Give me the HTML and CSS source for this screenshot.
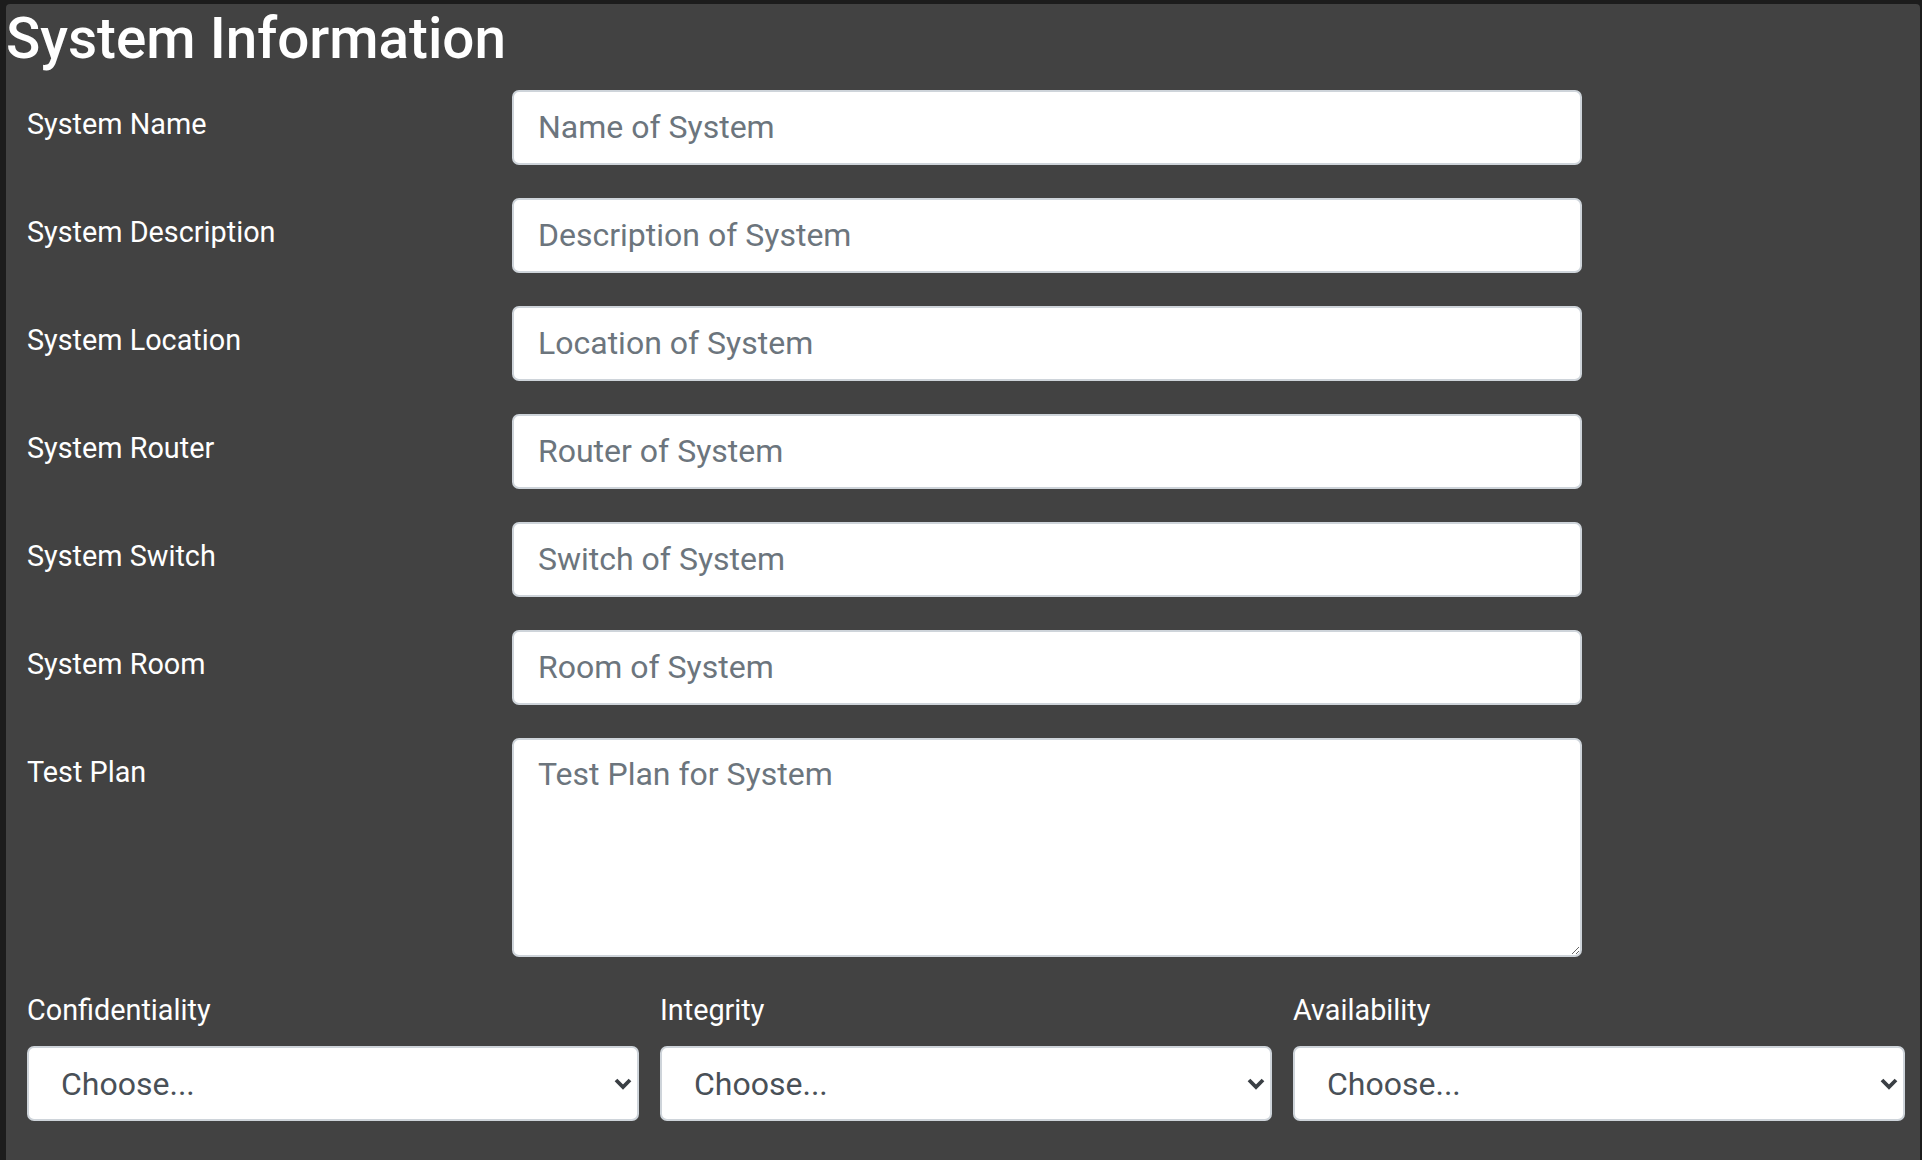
FILE: index.html
```html
<!DOCTYPE html>
<html lang="en">
<head>
<meta charset="utf-8">
<title>System Information</title>
<link rel="stylesheet" href="styles.css">
</head>
<body>
<div class="panel">
  <h2 class="title">System Information</h2>
  <form class="form">
    <div class="row">
      <label class="label" for="f-name">System Name</label>
      <input class="field" id="f-name" type="text" placeholder="Name of System">
    </div>
    <div class="row">
      <label class="label" for="f-desc">System Description</label>
      <input class="field" id="f-desc" type="text" placeholder="Description of System">
    </div>
    <div class="row">
      <label class="label" for="f-loc">System Location</label>
      <input class="field" id="f-loc" type="text" placeholder="Location of System">
    </div>
    <div class="row">
      <label class="label" for="f-router">System Router</label>
      <input class="field" id="f-router" type="text" placeholder="Router of System">
    </div>
    <div class="row">
      <label class="label" for="f-switch">System Switch</label>
      <input class="field" id="f-switch" type="text" placeholder="Switch of System">
    </div>
    <div class="row">
      <label class="label" for="f-room">System Room</label>
      <input class="field" id="f-room" type="text" placeholder="Room of System">
    </div>
    <div class="row">
      <label class="label" for="f-plan">Test Plan</label>
      <textarea class="field area" id="f-plan" placeholder="Test Plan for System"></textarea>
    </div>
    <div class="cia">
      <div class="cia-col">
        <label class="cia-label" for="s-conf">Confidentiality</label>
        <div class="select-wrap">
          <select class="select" id="s-conf"><option>Choose...</option></select>
          <svg class="chev" width="20" height="14" viewBox="0 0 20 14"><path d="M3 3 L10 10 L17 3" fill="none" stroke="#3a3f44" stroke-width="3.8"/></svg>
        </div>
      </div>
      <div class="cia-col">
        <label class="cia-label" for="s-int">Integrity</label>
        <div class="select-wrap">
          <select class="select" id="s-int"><option>Choose...</option></select>
          <svg class="chev" width="20" height="14" viewBox="0 0 20 14"><path d="M3 3 L10 10 L17 3" fill="none" stroke="#3a3f44" stroke-width="3.8"/></svg>
        </div>
      </div>
      <div class="cia-col">
        <label class="cia-label" for="s-avail">Availability</label>
        <div class="select-wrap">
          <select class="select" id="s-avail"><option>Choose...</option></select>
          <svg class="chev" width="20" height="14" viewBox="0 0 20 14"><path d="M3 3 L10 10 L17 3" fill="none" stroke="#3a3f44" stroke-width="3.8"/></svg>
        </div>
      </div>
    </div>
  </form>
</div>
</body>
</html>
```

FILE: styles.css
```css
html, body {
  margin: 0;
  padding: 0;
  height: 100%;
}
body {
  background: #1c1c1c;
  font-family: Roboto, "Liberation Sans", sans-serif;
  overflow: hidden;
}
.panel {
  margin: 4px 2px 0 6px;
  background: #424242;
  border-radius: 4px 4px 0 0;
  min-height: 1156px;
  box-sizing: border-box;
}
.title {
  margin: 0;
  font-size: 56.6px;
  font-weight: 500;
  line-height: 1.22;
  color: #ffffff;
}
.form {
  margin-top: 17px;
  padding-left: 21px;
}
.row {
  display: grid;
  grid-template-columns: 485px 1070px;
  margin-bottom: 33px;
  align-items: start;
}
.label {
  padding-top: 12.5px;
  font-size: 28.8px;
  line-height: 1.5;
  color: #ffffff;
}
.field {
  box-sizing: border-box;
  width: 1070px;
  height: 75px;
  margin: 0;
  padding: 0 24px 2px;
  border: 2px solid #ced4da;
  border-radius: 7px;
  background: #ffffff;
  font-family: Roboto, "Liberation Sans", sans-serif;
  font-size: 32px;
  line-height: 1.5;
  color: #495057;
  outline: none;
}
.field::placeholder {
  color: #6c757d;
  opacity: 1;
}
.area {
  height: 219px;
  padding-top: 10px;
  resize: vertical;
  display: block;
}
.cia {
  display: grid;
  grid-template-columns: repeat(3, 612px);
  column-gap: 21px;
}
.cia-col {
  display: flex;
  flex-direction: column;
}
.cia-label {
  font-size: 28.8px;
  line-height: 1.5;
  color: #ffffff;
  margin-top: -1px;
  margin-bottom: 14px;
}
.select-wrap {
  position: relative;
}
.select {
  -webkit-appearance: none;
  appearance: none;
  box-sizing: border-box;
  width: 100%;
  height: 75px;
  margin: 0;
  padding: 0 40px 0 32px;
  border: 2px solid #ced4da;
  border-radius: 7px;
  background: #ffffff;
  font-family: Roboto, "Liberation Sans", sans-serif;
  font-size: 32px;
  color: #495057;
  outline: none;
}
.chev {
  position: absolute;
  right: 6px;
  top: 31px;
  pointer-events: none;
}
```
